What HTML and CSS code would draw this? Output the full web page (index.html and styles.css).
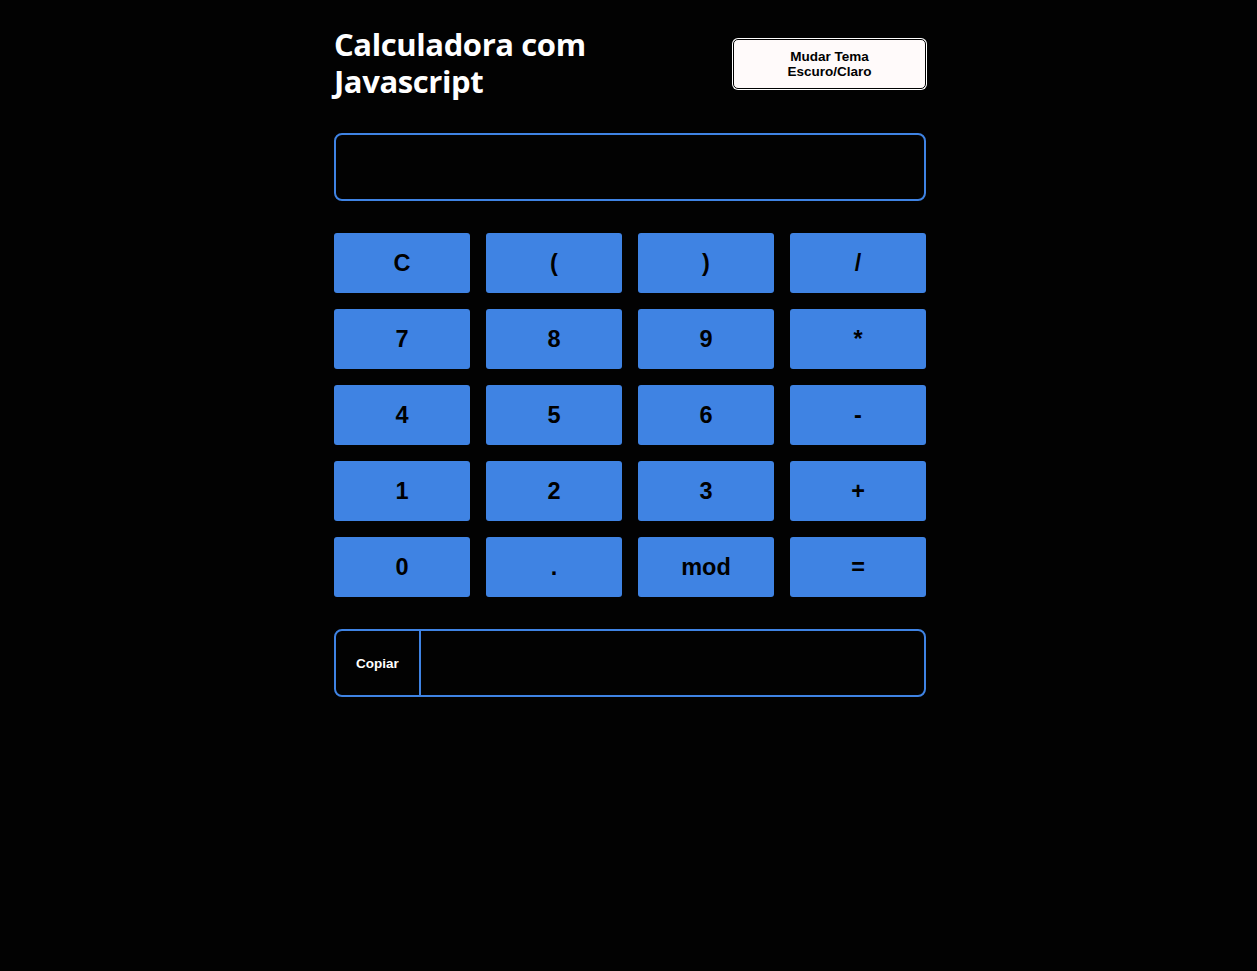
FILE: index.html
```html
<!DOCTYPE html>
<html lang="pt-BR">
<head>
<meta charset="utf-8">
<title>Calculadora com Javascript</title>
<link rel="stylesheet" href="styles.css">
</head>
<body>
<main class="app">
  <header class="header">
    <h1 class="title">Calculadora com Javascript</h1>
    <button class="theme-btn">Mudar Tema<br>Escuro/Claro</button>
  </header>
  <div class="display"></div>
  <div class="keys">
    <button class="key">C</button>
    <button class="key">(</button>
    <button class="key">)</button>
    <button class="key">/</button>
    <button class="key">7</button>
    <button class="key">8</button>
    <button class="key">9</button>
    <button class="key">*</button>
    <button class="key">4</button>
    <button class="key">5</button>
    <button class="key">6</button>
    <button class="key">-</button>
    <button class="key">1</button>
    <button class="key">2</button>
    <button class="key">3</button>
    <button class="key">+</button>
    <button class="key">0</button>
    <button class="key">.</button>
    <button class="key">mod</button>
    <button class="key">=</button>
  </div>
  <div class="copy-bar">
    <button class="copy-btn">Copiar</button>
    <div class="copy-out"></div>
  </div>
</main>
</body>
</html>
```

FILE: styles.css
```css
html, body {
  margin: 0;
  padding: 0;
  background: #020202;
}
body {
  font-family: "Liberation Sans", Arial, sans-serif;
  padding-left: 3px;
}
.app {
  width: 592px;
  margin: 0 auto;
  padding-top: 26px;
}
.header {
  display: flex;
  justify-content: space-between;
  align-items: flex-start;
}
.title {
  margin: 0;
  width: 300px;
  color: #fff;
  font-family: "Open Sans", sans-serif;
  font-weight: 700;
  font-size: 31px;
  line-height: 37px;
  letter-spacing: -0.4px;
}
.theme-btn {
  margin-top: 13px;
  width: 193px;
  height: 50px;
  background: #fffafa;
  border: 1px solid #000;
  border-radius: 5px;
  box-shadow: 0 0 0 1px #fff;
  color: #000;
  font-family: "Liberation Sans", Arial, sans-serif;
  font-weight: 700;
  font-size: 13.5px;
  line-height: 15px;
  padding: 0;
}
.display {
  margin-top: 33px;
  height: 64px;
  border: 2px solid #3f83e3;
  border-radius: 8px;
}
.keys {
  margin-top: 32px;
  display: grid;
  grid-template-columns: repeat(4, 1fr);
  gap: 16px;
}
.key {
  height: 60px;
  background: #3f83e3;
  border: none;
  border-radius: 3px;
  color: #000;
  font-family: "Liberation Sans", Arial, sans-serif;
  font-weight: 700;
  font-size: 23.5px;
  padding: 0;
}
.copy-bar {
  margin-top: 32px;
  height: 64px;
  border: 2px solid #3f83e3;
  border-radius: 8px;
  display: flex;
}
.copy-btn {
  width: 85px;
  background: transparent;
  border: none;
  border-right: 2px solid #3f83e3;
  color: #fff;
  font-family: "Liberation Sans", Arial, sans-serif;
  font-weight: 700;
  font-size: 13.5px;
  padding: 0;
}
.copy-out {
  flex: 1;
}
```
